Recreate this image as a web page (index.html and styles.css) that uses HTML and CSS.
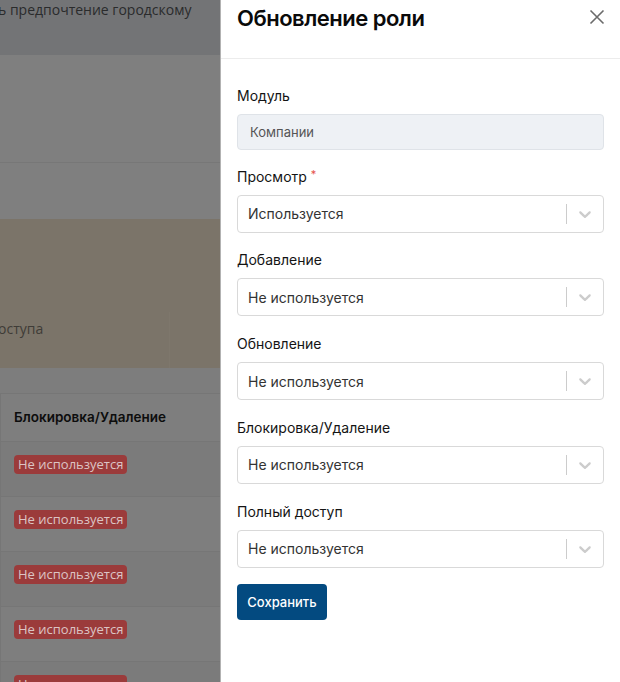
FILE: index.html
```html
<!DOCTYPE html>
<html lang="ru">
<head>
<meta charset="utf-8">
<title>Обновление роли</title>
<link rel="stylesheet" href="styles.css">
</head>
<body>
<div class="page">
  <div class="band-top"><span class="cut-text">ь предпочтение городскому</span></div>
  <div class="row-plain row-a"></div>
  <div class="row-plain row-b"></div>
  <div class="alert">
    <div class="alert-cell"><span class="cut-text">оступа</span></div>
  </div>
  <div class="spacer"></div>
  <div class="table">
    <div class="th">Блокировка/Удаление</div>
    <div class="td odd"><span class="badge">Не используется</span></div>
    <div class="td"><span class="badge">Не используется</span></div>
    <div class="td odd"><span class="badge">Не используется</span></div>
    <div class="td"><span class="badge">Не используется</span></div>
    <div class="td odd"><span class="badge">Не используется</span></div>
  </div>
</div>

<aside class="drawer">
  <header class="drawer-header">
    <h5 class="drawer-title">Обновление роли</h5>
    <button class="close-btn" aria-label="Закрыть">
      <svg width="16" height="16" viewBox="0 0 16 16"><path d="M1.5 1.5 L14.5 14.5 M14.5 1.5 L1.5 14.5" stroke="#6b6b6b" stroke-width="1.6" fill="none"/></svg>
    </button>
  </header>
  <div class="drawer-body">
    <div class="field first">
      <label class="label">Модуль</label>
      <div class="input-disabled">Компании</div>
    </div>
    <div class="field">
      <label class="label">Просмотр <span class="req">*</span></label>
      <div class="select">
        <span class="select-value">Используется</span>
        <span class="sep"></span>
        <span class="indicator"><svg width="20" height="20" viewBox="0 0 20 20"><path fill="#cccccc" d="M4.516 7.548c0.436-0.446 1.043-0.481 1.576 0l3.908 3.747 3.908-3.747c0.533-0.481 1.141-0.446 1.574 0 0.436 0.445 0.408 1.197 0 1.615-0.406 0.418-4.695 4.502-4.695 4.502-0.217 0.223-0.502 0.335-0.787 0.335s-0.57-0.112-0.789-0.335c0 0-4.287-4.084-4.695-4.502s-0.436-1.17 0-1.615z"/></svg></span>
      </div>
    </div>
    <div class="field">
      <label class="label">Добавление</label>
      <div class="select">
        <span class="select-value">Не используется</span>
        <span class="sep"></span>
        <span class="indicator"><svg width="20" height="20" viewBox="0 0 20 20"><path fill="#cccccc" d="M4.516 7.548c0.436-0.446 1.043-0.481 1.576 0l3.908 3.747 3.908-3.747c0.533-0.481 1.141-0.446 1.574 0 0.436 0.445 0.408 1.197 0 1.615-0.406 0.418-4.695 4.502-4.695 4.502-0.217 0.223-0.502 0.335-0.787 0.335s-0.57-0.112-0.789-0.335c0 0-4.287-4.084-4.695-4.502s-0.436-1.17 0-1.615z"/></svg></span>
      </div>
    </div>
    <div class="field">
      <label class="label">Обновление</label>
      <div class="select">
        <span class="select-value">Не используется</span>
        <span class="sep"></span>
        <span class="indicator"><svg width="20" height="20" viewBox="0 0 20 20"><path fill="#cccccc" d="M4.516 7.548c0.436-0.446 1.043-0.481 1.576 0l3.908 3.747 3.908-3.747c0.533-0.481 1.141-0.446 1.574 0 0.436 0.445 0.408 1.197 0 1.615-0.406 0.418-4.695 4.502-4.695 4.502-0.217 0.223-0.502 0.335-0.787 0.335s-0.57-0.112-0.789-0.335c0 0-4.287-4.084-4.695-4.502s-0.436-1.17 0-1.615z"/></svg></span>
      </div>
    </div>
    <div class="field">
      <label class="label">Блокировка/Удаление</label>
      <div class="select">
        <span class="select-value">Не используется</span>
        <span class="sep"></span>
        <span class="indicator"><svg width="20" height="20" viewBox="0 0 20 20"><path fill="#cccccc" d="M4.516 7.548c0.436-0.446 1.043-0.481 1.576 0l3.908 3.747 3.908-3.747c0.533-0.481 1.141-0.446 1.574 0 0.436 0.445 0.408 1.197 0 1.615-0.406 0.418-4.695 4.502-4.695 4.502-0.217 0.223-0.502 0.335-0.787 0.335s-0.57-0.112-0.789-0.335c0 0-4.287-4.084-4.695-4.502s-0.436-1.17 0-1.615z"/></svg></span>
      </div>
    </div>
    <div class="field">
      <label class="label">Полный доступ</label>
      <div class="select">
        <span class="select-value">Не используется</span>
        <span class="sep"></span>
        <span class="indicator"><svg width="20" height="20" viewBox="0 0 20 20"><path fill="#cccccc" d="M4.516 7.548c0.436-0.446 1.043-0.481 1.576 0l3.908 3.747 3.908-3.747c0.533-0.481 1.141-0.446 1.574 0 0.436 0.445 0.408 1.197 0 1.615-0.406 0.418-4.695 4.502-4.695 4.502-0.217 0.223-0.502 0.335-0.787 0.335s-0.57-0.112-0.789-0.335c0 0-4.287-4.084-4.695-4.502s-0.436-1.17 0-1.615z"/></svg></span>
      </div>
    </div>
    <button class="btn-save">Сохранить</button>
  </div>
</aside>
</body>
</html>
```
FILE: styles.css
```css
* { box-sizing: border-box; }
html, body { margin: 0; padding: 0; }
body {
  width: 620px;
  height: 682px;
  overflow: hidden;
  background: #7d7d7d;
  font-family: "Open Sans", "Noto Sans", sans-serif;
}

/* Dimmed page behind the drawer */
.page {
  width: 220px;
  height: 682px;
  overflow: hidden;
  display: flex;
  flex-direction: column;
}
.band-top {
  flex: none;
  height: 55px;
  background: #737476;
  color: #2a2b2c;
  font-size: 14px;
  line-height: 19px;
  white-space: nowrap;
  overflow: hidden;
}
.cut-text { display: inline-block; margin-left: -2px; }
.row-plain { background: #7f7f7f; flex: none; }
.row-a { height: 108px; border-bottom: 1px solid #777777; }
.row-b { height: 56px; }
.alert {
  flex: none;
  height: 149px;
  background: #7b7469;
  display: flex;
  flex-direction: column;
  justify-content: flex-end;
}
.alert-cell {
  height: 56px;
  width: 170px;
  color: #3f3c37;
  font-size: 14px;
  line-height: 20px;
  padding-top: 7px;
  white-space: nowrap;
  overflow: hidden;
  border-right: 1px solid #7e776c;
}
.spacer { flex: none; height: 25px; background: #7d7d7d; }
.table {
  flex: none;
  border-top: 1px solid #767676;
  border-left: 1px solid #767676;
}
.th {
  height: 48px;
  border-bottom: 1px solid #767676;
  background: #7e7e7e;
  color: #0d0d0d;
  font-family: "Inter", "Noto Sans", sans-serif;
  font-weight: 600;
  font-size: 13.5px;
  line-height: 47px;
  padding-left: 13px;
  white-space: nowrap;
}
.td {
  height: 55px;
  border-bottom: 1px solid #767676;
  background: #7e7e7e;
  padding: 10px 0 0 13px;
}
.td.odd { background: #7b7b7b; }
.badge {
  display: inline-block;
  background: #9b3b3b;
  color: #dcc4c4;
  font-size: 13px;
  line-height: 19px;
  height: 19px;
  padding: 0 4px;
  border-radius: 4px;
  white-space: nowrap;
}

/* Drawer */
.drawer {
  position: fixed;
  top: 0;
  right: 0;
  width: 400px;
  height: 682px;
  background: #ffffff;
  border-left: 1px solid rgba(0, 0, 0, 0.3);
  display: flex;
  flex-direction: column;
  font-family: "Inter", "Noto Sans", sans-serif;
  color: #222222;
}
.drawer-header {
  flex: none;
  height: 59px;
  border-bottom: 1px solid #ececec;
  display: flex;
  align-items: flex-start;
  justify-content: space-between;
  padding: 4px 15px 0 16px;
}
.drawer-title {
  margin: 0;
  font-size: 22px;
  line-height: 28px;
  font-weight: 600;
  color: #0a0a0a;
  letter-spacing: -0.5px;
}
.close-btn {
  border: 0;
  background: none;
  padding: 0;
  margin-top: 5px;
  width: 16px;
  height: 16px;
  display: flex;
}
.drawer-body {
  padding: 25.5px 16px 16px 16px;
  display: flex;
  flex-direction: column;
  align-items: stretch;
}
.field { margin-bottom: 16.75px; display: flex; flex-direction: column; }
.field.first { margin-bottom: 16px; }
.label {
  font-size: 14px;
  line-height: 21px;
  font-weight: 400;
  color: #141414;
  margin-bottom: 8px;
}
.req { color: #e5534b; font-size: 11px; vertical-align: top; position: relative; top: -2px; }
.input-disabled {
  height: 36px;
  background: #eef1f5;
  border: 1px solid #dfe3e8;
  border-radius: 4px;
  font-size: 13px;
  color: #555555;
  line-height: 34px;
  padding-left: 12px;
}
.select {
  height: 38px;
  border: 1px solid #d9d9d9;
  border-radius: 4px;
  display: flex;
  align-items: center;
  background: #ffffff;
}
.select-value {
  flex: 1;
  padding-left: 10px;
  font-size: 14px;
  color: #333333;
}
.sep {
  width: 1px;
  align-self: stretch;
  margin: 8px 0;
  background: #cccccc;
}
.indicator { padding: 8px; display: flex; }
.btn-save {
  align-self: flex-start;
  width: 90px;
  height: 36px;
  background: #034a80;
  color: #ffffff;
  border: 0;
  border-radius: 4px;
  font-family: "Inter", "Noto Sans", sans-serif;
  font-size: 13px;
  font-weight: 500;
  padding: 0;
}
```
